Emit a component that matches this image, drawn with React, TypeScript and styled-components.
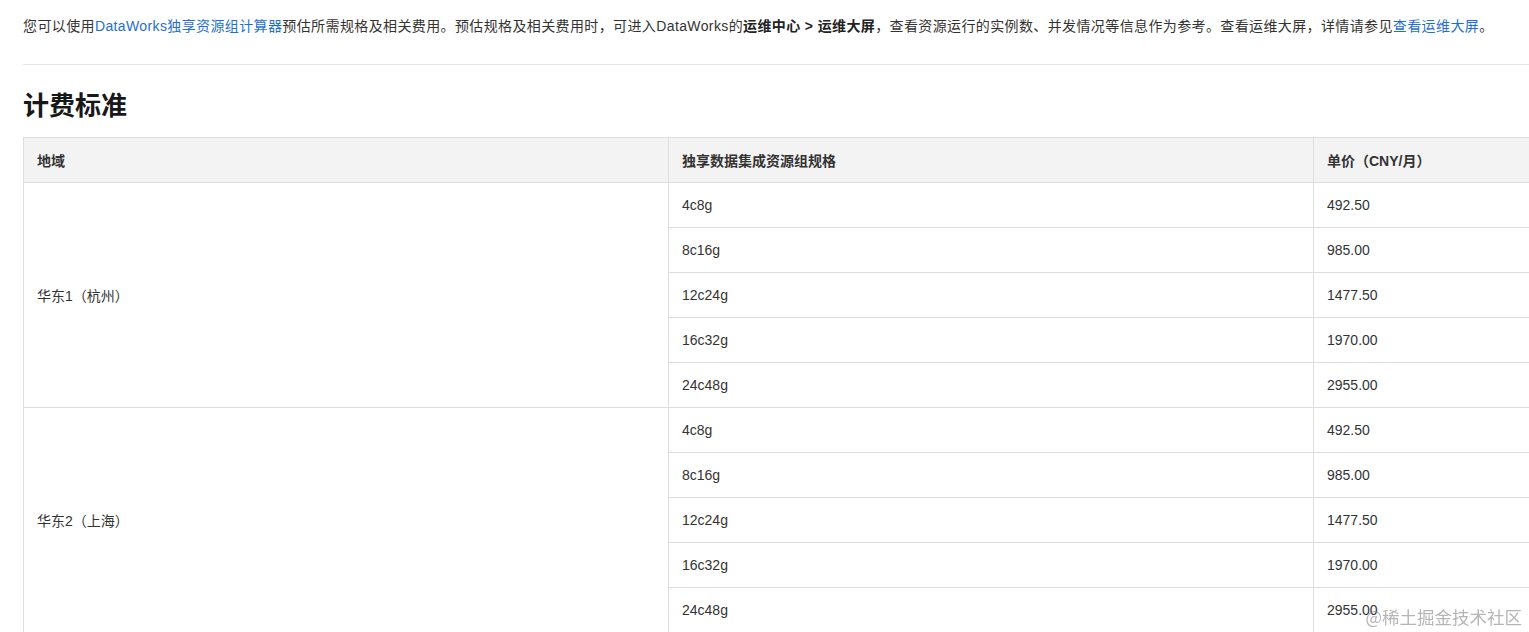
import React from "react";
import styled, { createGlobalStyle } from "styled-components";

const Global = createGlobalStyle`
  html, body { margin: 0; padding: 0; background: #fff; overflow: hidden; }
  body { font-family: "Liberation Sans", Arial, "Noto Sans CJK SC", sans-serif; color: #333; }
`;

const Page = styled.div`
  padding: 0 0 0 23px;
  width: 2000px;
`;

const Intro = styled.p`
  margin: 0;
  padding-top: 16px;
  font-size: 14px;
  line-height: 20px;
  letter-spacing: 0.38px;
  color: #333;
  width: 1500px;
`;

const Link = styled.a`
  color: #1f6fd1;
  text-decoration: none;
`;

const Strong = styled.b`
  font-weight: 700;
  color: #222;
`;

const Rule = styled.hr`
  margin: 28px 0 0 0;
  border: none;
  border-top: 1px solid #e6e6e6;
  width: 1506px;
`;

const Heading = styled.h2`
  margin: 0;
  padding: 22px 0 16px;
  font-size: 26px;
  line-height: 34px;
  font-weight: 700;
  color: #181818;
  font-family: "Noto Sans CJK SC", "Liberation Sans", sans-serif;
`;

const Table = styled.table`
  border-collapse: collapse;
  width: 1936px;
  table-layout: fixed;
  font-size: 14px;
`;

const Th = styled.th`
  background: #f3f3f3;
  border: 1px solid #dedede;
  height: 45px;
  padding: 0 13px;
  text-align: left;
  font-weight: 700;
  color: #333;
  box-sizing: border-box;
`;

const Td = styled.td`
  border: 1px solid #dedede;
  height: 45px;
  padding: 0 13px;
  text-align: left;
  color: #333;
  box-sizing: border-box;
`;

const Watermark = styled.div`
  position: fixed;
  right: 7px;
  bottom: 3px;
  font-family: "Noto Sans CJK SC", sans-serif;
  font-size: 17.5px;
  color: rgba(120, 120, 120, 0.55);
  pointer-events: none;
`;

const specs = [
  ["4c8g", "492.50"],
  ["8c16g", "985.00"],
  ["12c24g", "1477.50"],
  ["16c32g", "1970.00"],
  ["24c48g", "2955.00"],
];

const regions = ["华东1（杭州）", "华东2（上海）"];

export default function App() {
  return (
    <>
      <Global />
      <Page>
        <Intro>
          您可以使用<Link href="#">DataWorks独享资源组计算器</Link>
          预估所需规格及相关费用。预估规格及相关费用时，可进入DataWorks的
          <Strong>运维中心 &gt; 运维大屏</Strong>，查看资源运行的实例数、并发情况等信息作为参考。查看运维大屏，详情请参见
          <Link href="#">查看运维大屏</Link>。
        </Intro>
        <Rule />
        <Heading>计费标准</Heading>
        <Table>
          <thead>
            <tr>
              <Th>地域</Th>
              <Th>独享数据集成资源组规格</Th>
              <Th>单价（CNY/月）</Th>
            </tr>
          </thead>
          <tbody>
            {regions.map((r) =>
              specs.map(([s, p], i) => (
                <tr key={r + s}>
                  {i === 0 && <Td rowSpan={specs.length}>{r}</Td>}
                  <Td>{s}</Td>
                  <Td>{p}</Td>
                </tr>
              ))
            )}
          </tbody>
        </Table>
      </Page>
      <Watermark>@稀土掘金技术社区</Watermark>
    </>
  );
}
